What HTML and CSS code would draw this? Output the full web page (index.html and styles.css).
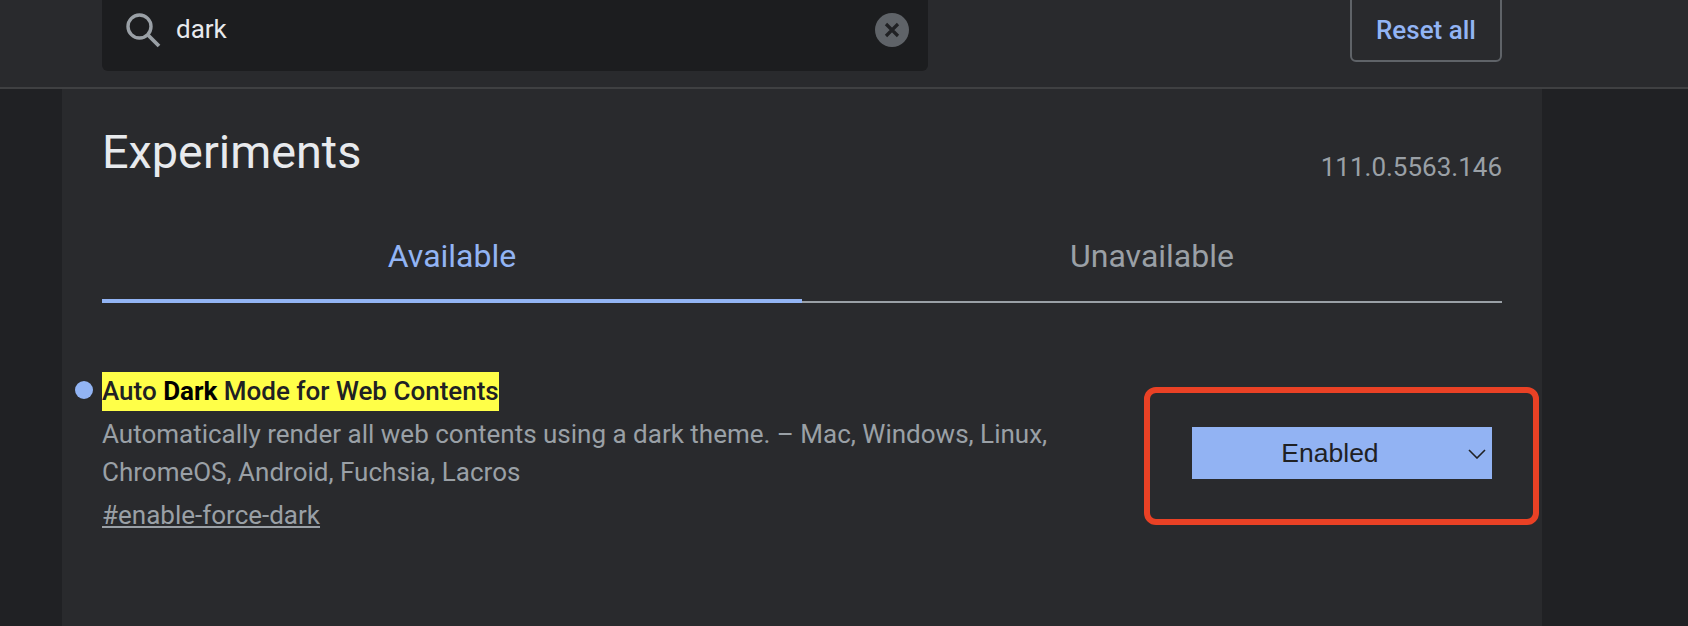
FILE: index.html
```html
<!DOCTYPE html>
<html lang="en">
<head>
<meta charset="utf-8">
<title>Experiments</title>
<link rel="stylesheet" href="styles.css">
</head>
<body>
<header class="header">
  <div class="search">
    <svg class="search-icon" viewBox="0 0 36 36" width="36" height="36" aria-hidden="true">
      <circle cx="14.5" cy="14.5" r="11.5" fill="none" stroke="#9aa0a6" stroke-width="3.4"/>
      <path d="M23 23L34 34" fill="none" stroke="#9aa0a6" stroke-width="3.8"/>
    </svg>
    <span class="search-text">dark</span>
    <svg class="clear-icon" viewBox="0 0 34 34" width="34" height="34" aria-hidden="true">
      <circle cx="17" cy="17" r="17" fill="#5f6368"/>
      <path d="M11 11L23 23M23 11L11 23" fill="none" stroke="#202124" stroke-width="3.2"/>
    </svg>
  </div>
  <button class="reset">Reset all</button>
</header>
<main class="panel">
  <div class="title-row">
    <h1 class="title">Experiments</h1>
    <span class="version">111.0.5563.146</span>
  </div>
  <nav class="tabs">
    <div class="tab tab-active">Available</div>
    <div class="tab">Unavailable</div>
  </nav>
  <section class="flag">
    <div class="flag-info">
      <span class="dot"></span>
      <h2 class="flag-name"><span class="hl">Auto <b>Dark</b> Mode for Web Contents</span></h2>
      <p class="flag-desc">Automatically render all web contents using a dark theme. – Mac, Windows, Linux, ChromeOS, Android, Fuchsia, Lacros</p>
      <a class="flag-link">#enable-force-dark</a>
    </div>
    <div class="select">
      <span>Enabled</span>
      <svg class="chev" viewBox="0 0 18 10" width="18" height="10" aria-hidden="true">
        <path d="M1 1L9 9L17 1" fill="none" stroke="#202124" stroke-width="1.6"/>
      </svg>
    </div>
    <div class="annotation"></div>
  </section>
</main>
</body>
</html>
```
FILE: styles.css
```css
* { box-sizing: border-box; }
html, body { height: 100%; }
body {
  margin: 0;
  background: #202124;
  font-family: Roboto, "Liberation Sans", sans-serif;
  overflow: hidden;
  display: flex;
  flex-direction: column;
}
.header {
  height: 89px;
  flex: none;
  background: #292a2d;
  border-bottom: 2px solid #3f4042;
  display: flex;
  justify-content: space-between;
  align-items: flex-start;
  padding: 0 186px 0 102px;
}
.search {
  width: 826px;
  height: 71px;
  background: #1c1d1f;
  border-radius: 0 0 6px 6px;
  display: flex;
  align-items: center;
  padding: 0 19px 12px 23px;
}
.search-icon { flex: none; margin-top: 1px; }
.search-text {
  margin: 0 0 2px 15px;
  font-size: 26px;
  color: #e8eaed;
  flex: 1;
}
.clear-icon { flex: none; margin-top: 1px; }
.reset {
  width: 152px;
  height: 72px;
  margin-top: -10px;
  padding: 8px 0 0;
  background: transparent;
  border: 2px solid #5f6368;
  border-radius: 6px;
  color: #92b4f4;
  font: 500 26px Roboto, sans-serif;
}
.panel {
  flex: 1;
  width: 1480px;
  margin-left: 62px;
  padding: 0 40px;
  background: #292a2d;
}
.title-row {
  display: flex;
  justify-content: space-between;
  align-items: flex-end;
  height: 92px;
}
.title {
  margin: 0 0 -1px;
  font-size: 46.8px;
  font-weight: 400;
  line-height: 60px;
  color: #e8eaed;
}
.version {
  font-size: 26px;
  line-height: 28px;
  color: #9aa0a6;
}
.tabs {
  display: flex;
  margin-top: 30px;
  height: 92px;
}
.tab {
  flex: 1;
  text-align: center;
  font-size: 32px;
  line-height: 60px;
  padding-top: 15px;
  color: #9aa0a6;
  border-bottom: 2px solid #9aa0a6;
}
.tab-active {
  color: #92b4f4;
  border-bottom: 4px solid #92b4f4;
}
.flag {
  position: relative;
  display: flex;
  justify-content: space-between;
  align-items: flex-start;
  margin-top: 69px;
}
.flag-info {
  position: relative;
  width: 960px;
}
.dot {
  position: absolute;
  left: -27px;
  top: 9px;
  width: 18px;
  height: 18px;
  border-radius: 50%;
  background: #92b4f4;
}
.flag-name {
  margin: 0 0 4px;
  font-size: 26px;
  font-weight: 500;
  line-height: 39px;
}
.hl { display: inline-block; background: #ffff48; color: #202124; }
.hl b { font-weight: 700; color: #000; }
.flag-desc {
  margin: 0;
  font-size: 26px;
  line-height: 38px;
  color: #9aa0a6;
}
.flag-link {
  display: inline-block;
  margin-top: 5px;
  font-size: 26px;
  line-height: 38px;
  color: #9aa0a6;
  text-decoration: underline;
}
.select {
  position: relative;
  width: 300px;
  height: 52px;
  margin: 55px 10px 0 0;
  background: #92b3f3;
  display: flex;
  align-items: center;
  justify-content: center;
  padding-right: 24px;
  color: #202124;
  font: 26.5px "Liberation Sans", Arial, sans-serif;
}
.chev { position: absolute; right: 6px; top: 22px; }
.annotation {
  position: absolute;
  left: 1042px;
  top: 15px;
  width: 395px;
  height: 138px;
  border: 6px solid #e94125;
  border-radius: 12px;
}
```
